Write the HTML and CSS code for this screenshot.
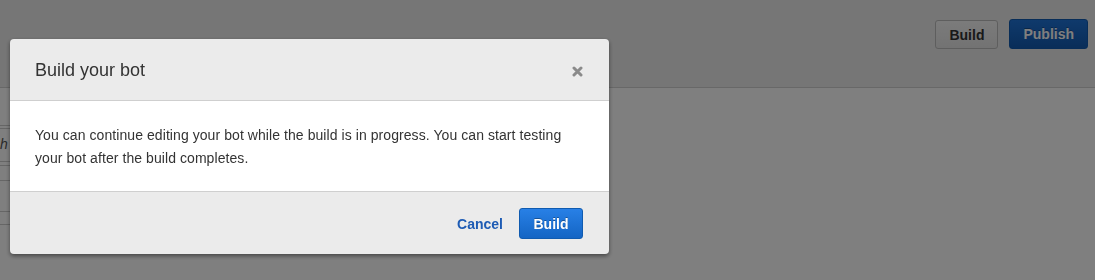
FILE: index.html
```html
<!DOCTYPE html>
<html lang="en">
<head>
  <meta charset="UTF-8" />
  <title>Build your bot</title>
  <link rel="stylesheet" href="styles.css">
</head>
<body>
  <!-- Page behind the dialog -->
  <div class="page">
    <div class="topbar">
      <button class="btn btn-default">Build</button>
      <button class="btn btn-primary">Publish</button>
    </div>
    <div class="content">
      <div class="rows">
        <div class="row r1"></div>
        <div class="row r2"></div>
        <div class="row r3"><i>h</i></div>
        <div class="row r4"></div>
        <div class="row r5"></div>
        <div class="row r6"></div>
        <div class="row r7"></div>
      </div>
    </div>
  </div>

  <!-- Backdrop -->
  <div class="backdrop"></div>

  <!-- Dialog -->
  <div class="modal">
    <div class="modal-header">
      <h3>Build your bot</h3>
      <svg class="close" width="11" height="11" viewBox="0 0 11 11">
        <path d="M2 2 L9 9 M9 2 L2 9" stroke="#8a8a8a" stroke-width="3" stroke-linecap="round"/>
      </svg>
    </div>
    <div class="modal-body">
      <p>You can continue editing your bot while the build is in progress. You can start testing your bot after the build completes.</p>
    </div>
    <div class="modal-footer">
      <a class="link" href="#">Cancel</a>
      <button class="btn btn-primary">Build</button>
    </div>
  </div>
</body>
</html>
```

FILE: styles.css
```css
/* BASE */
* { margin: 0; padding: 0; box-sizing: border-box; }
html, body { height: 100%; }
body {
  font-family: "Liberation Sans", Arial, sans-serif;
  color: #333;
  background: #fff;
  overflow: hidden;
}

/* PAGE */
.page { height: 100%; display: flex; flex-direction: column; }
.topbar {
  height: 88px;
  background: #ececec;
  border-bottom: 1px solid #d0d0d0;
  display: flex; justify-content: flex-end; align-items: flex-start;
  gap: 11px;
  padding: 19px 7px 0 0;
}
.content { flex: 1; background: #fff; }
.rows { width: 30px; }
.row { border-bottom: 1px solid #ccc; }
.r1 { height: 38px; }
.r2 { height: 3px; }
.r3 { height: 33px; font-size: 14px; line-height: 30px; color: #555; }
.r4 { height: 4px; }
.r5 { height: 15px; }
.r6 { height: 31px; }
.r7 { height: 13px; }

/* BUTTONS */
.btn {
  font-family: inherit;
  font-size: 14px; font-weight: 700;
  height: 30px; border-radius: 3px;
  padding: 0 13px; cursor: pointer;
}
.btn-default {
  background: linear-gradient(#f7f7f7, #e6e6e6);
  border: 1px solid #bdbdbd;
  color: #333;
  margin-top: 1px; height: 29px;
}
.btn-primary {
  background: linear-gradient(#2880e6, #1465c4);
  border: 1px solid #105bb0;
  color: #fff;
  text-shadow: 0 -1px 0 rgba(0,0,0,0.3);
}
.topbar .btn-primary {
  background: linear-gradient(#1f74d8, #125bb2);
}

/* BACKDROP */
.backdrop {
  position: fixed; inset: 0;
  background: rgba(0,0,0,0.5);
}

/* MODAL */
.modal {
  position: fixed; top: 39px; left: 10px;
  width: 599px;
  background: #ebebeb;
  border-radius: 4px;
  box-shadow: 0 2px 4px rgba(0,0,0,0.45);
  overflow: hidden;
}
.modal-header {
  height: 62px;
  display: flex; align-items: center; justify-content: space-between;
  padding: 0 26px 0 25px;
  border-bottom: 1px solid #cfcfcf;
}
.modal-header h3 {
  font-size: 18px; font-weight: 400; color: #333;
  padding-top: 1px;
}
.close { margin-top: 3px; }
.modal-body {
  background: #fff;
  padding: 23px 25px 21px;
  border-bottom: 1px solid #cfcfcf;
}
.modal-body p { font-size: 14px; line-height: 23px; letter-spacing: 0.07px; }
.modal-footer {
  height: 62px;
  display: flex; align-items: center; justify-content: flex-end;
  gap: 16px;
  padding: 1px 26px 0 0;
}
.link {
  font-size: 14px; font-weight: 700;
  color: #1d5bb4; text-decoration: none;
}
.modal-footer .btn-primary { width: 64px; padding: 0; height: 31px; }
```
